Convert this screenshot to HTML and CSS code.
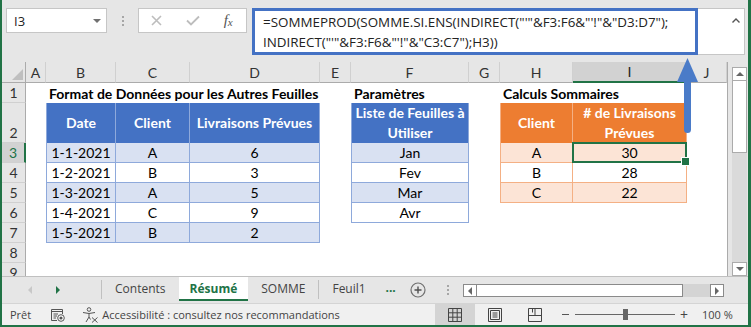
FILE: index.html
```html
<!DOCTYPE html>
<html lang="fr">
<head>
  <meta charset="UTF-8" />
  <meta name="viewport" content="width=device-width, initial-scale=1.0" />
  <title>Résumé - SOMMEPROD et INDIRECT</title>
  <link rel="stylesheet" href="styles.css">
</head>
<body>
  <div class="app">
    <!-- barre de formule -->
    <div class="fbar">
      <div class="namebox"><span>I3</span><i class="caret"></i></div>
      <div class="grip"><b></b><b></b><b></b></div>
      <div class="fbtns">
        <span><svg width="11" height="11" viewBox="0 0 11 11"><path d="M1 1L10 10M10 1L1 10" stroke="#bdbdbd" stroke-width="1.6" fill="none"/></svg></span>
        <span><svg width="14" height="11" viewBox="0 0 14 11"><path d="M1 5.5L5 9.5L13 1.5" stroke="#bdbdbd" stroke-width="1.8" fill="none"/></svg></span>
        <span class="fx">f<small>x</small></span>
      </div>
      <div class="formula">
        <p>=SOMMEPROD(SOMME.SI.ENS(INDIRECT("'"&amp;F3:F6&amp;"'!"&amp;"D3:D7");</p>
        <p>INDIRECT("'"&amp;F3:F6&amp;"'!"&amp;"C3:C7");H3))</p>
      </div>
      <div class="expand"><svg width="8" height="5" viewBox="0 0 8 5"><path d="M0.5 4.5L4 1L7.5 4.5" stroke="#555" stroke-width="1.4" fill="none"/></svg></div>
    </div>

    <div class="main">
      <div class="sheet">
        <div class="corner"><i></i></div>
        <div class="col">A</div>
        <div class="col">B</div>
        <div class="col">C</div>
        <div class="col">D</div>
        <div class="col">E</div>
        <div class="col">F</div>
        <div class="col">G</div>
        <div class="col">H</div>
        <div class="col on">I</div>
        <div class="col">J</div>

        <div class="row">1</div>
        <div></div>
        <div class="t">Format de Données pour les Autres Feuilles</div>
        <div></div><div></div><div></div>
        <div class="t">Paramètres</div>
        <div></div>
        <div class="t">Calculs Sommaires</div>

        <div class="row">2</div>
        <div></div>
        <div class="bh first">Date</div>
        <div class="bh">Client</div>
        <div class="bh">Livraisons Prévues</div>
        <div></div>
        <div class="bh first">Liste de Feuilles à<br>Utiliser</div>
        <div></div>
        <div class="oh first">Client</div>
        <div class="oh"># de Livraisons<br>Prévues</div>

        <div class="row on">3</div>
        <div></div>
        <div class="bd first alt">1-1-2021</div>
        <div class="bd alt">A</div>
        <div class="bd alt">6</div>
        <div></div>
        <div class="bd first alt">Jan</div>
        <div></div>
        <div class="od first oalt">A</div>
        <div class="od oalt sel">30</div>

        <div class="row">4</div>
        <div></div>
        <div class="bd first">1-2-2021</div>
        <div class="bd">B</div>
        <div class="bd">3</div>
        <div></div>
        <div class="bd first">Fev</div>
        <div></div>
        <div class="od first">B</div>
        <div class="od">28</div>

        <div class="row">5</div>
        <div></div>
        <div class="bd first alt">1-3-2021</div>
        <div class="bd alt">A</div>
        <div class="bd alt">5</div>
        <div></div>
        <div class="bd first alt">Mar</div>
        <div></div>
        <div class="od first oalt">C</div>
        <div class="od oalt">22</div>

        <div class="row">6</div>
        <div></div>
        <div class="bd first">1-4-2021</div>
        <div class="bd">C</div>
        <div class="bd">9</div>
        <div></div>
        <div class="bd first">Avr</div>

        <div class="row">7</div>
        <div></div>
        <div class="bd first alt">1-5-2021</div>
        <div class="bd alt">B</div>
        <div class="bd alt">2</div>

        <div class="row">8</div>
        <div class="row">9</div>
      </div>

      <div class="vscroll">
        <span class="sbtn up"></span>
        <span class="thumb"></span>
        <span class="track"></span>
        <span class="sbtn down"></span>
      </div>
    </div>

    <!-- onglets -->
    <div class="tabs">
      <div class="nav"><i class="prev"></i><i class="next"></i></div>
      <span class="bar"></span>
      <div class="tab">Contents</div>
      <div class="tab active">Résumé</div>
      <div class="tab">SOMME</div>
      <span class="bar"></span>
      <div class="tab">Feuil1</div>
      <div class="more">...</div>
      <div class="add"><svg width="16" height="16" viewBox="0 0 16 16"><circle cx="8" cy="8" r="7" stroke="#707070" stroke-width="1.2" fill="none"/><path d="M8 4.5V11.5M4.5 8H11.5" stroke="#505050" stroke-width="1.4"/></svg></div>
      <div class="grip dots"><b></b><b></b><b></b></div>
      <div class="hscroll">
        <span class="hbtn left"></span>
        <span class="hthumb"></span>
        <span class="htrack"></span>
        <span class="hbtn right"></span>
      </div>
    </div>

    <!-- barre d'état -->
    <div class="status">
      <span class="ready">Prêt</span>
      <svg class="macro" width="15" height="14" viewBox="0 0 15 14">
        <path d="M1.5 1.5H12.5V6M1.5 1.5V12.5H7" stroke="#555" fill="none"/>
        <path d="M1.5 3.5H12.5" stroke="#555"/>
        <path d="M3.5 6H8M3.5 8H7M3.5 10H6" stroke="#555"/>
        <circle cx="11" cy="10" r="3.3" stroke="#555" fill="#fff"/>
        <circle cx="11" cy="10" r="1.6" fill="#555"/>
      </svg>
      <svg class="access" width="17" height="16" viewBox="0 0 17 16">
        <circle cx="7" cy="2.5" r="1.8" stroke="#555" fill="none"/>
        <path d="M1 5.5L7 6.5L13 5.5M7 6.5V10M7 10L4 15M7 10L8.5 12.5" stroke="#555" fill="none"/>
        <path d="M10 10.5L15.5 15.5M15.5 10.5L10 15.5" stroke="#555"/>
      </svg>
      <span class="a11y">Accessibilité : consultez nos recommandations</span>
      <div class="views">
        <span class="view on"><svg width="14" height="14" viewBox="0 0 14 14"><path d="M0.5 0.5H13.5V13.5H0.5ZM0.5 4.8H13.5M0.5 9.2H13.5M4.8 0.5V13.5M9.2 0.5V13.5" stroke="#444" fill="none"/></svg></span>
        <span class="view"><svg width="14" height="14" viewBox="0 0 14 14"><path d="M0.5 0.5H13.5V13.5H0.5ZM2.5 2.5H11.5V11.5H2.5ZM4.5 5H9.5M4.5 7H9.5M4.5 9H9.5" stroke="#444" fill="none"/></svg></span>
        <span class="view"><svg width="14" height="14" viewBox="0 0 14 14"><path d="M0.5 0.5H13.5V13.5H0.5ZM0.5 7.5H13.5M7 0.5V7.5M4.5 0.5V4.5" stroke="#444" fill="none"/></svg></span>
      </div>
      <div class="zoom">
        <span class="minus"></span>
        <span class="slider"><i></i></span>
        <span class="plus">+</span>
        <span class="pct">100 %</span>
      </div>
    </div>

    <svg class="arrow" width="23" height="80" viewBox="0 0 23 80">
      <path d="M11.5 2L22 26H15V73.5A3.5 3.5 0 0 1 8 73.5V26H1Z" fill="#4a7bc8"/>
    </svg>
  </div>
</body>
</html>
```

FILE: styles.css
```css
* {
  box-sizing: border-box;
}
body {
  margin: 0;
  font-family: "Open Sans", sans-serif;
  color: #222;
}

.app {
  position: relative;
  width: 751px;
  height: 327px;
  overflow: hidden;
  background: #e6e6e6;
  border: 2px solid #217346;
  border-top: 0;
  border-right-width: 3px;
}

/* barre de formule */
.fbar {
  height: 62px;
  display: flex;
  align-items: flex-start;
  padding: 8px 0 0 4px;
}
.namebox {
  width: 101px;
  height: 25px;
  display: flex;
  align-items: center;
  justify-content: space-between;
  padding: 0 5px 0 7px;
  background: #fff;
  border: 1px solid #c6c6c6;
  font-size: 13px;
}
.caret {
  border-left: 4px solid transparent;
  border-right: 4px solid transparent;
  border-top: 4px solid #707070;
}
.grip {
  width: 2px;
  margin: 8px 14px 0 15px;
  display: flex;
  flex-direction: column;
  gap: 2px;
}
.grip b {
  width: 2px;
  height: 2px;
  background: #a6a6a6;
}
.fbtns {
  width: 109px;
  height: 25px;
  display: flex;
  background: #fff;
  border: 1px solid #c6c6c6;
}
.fbtns > span {
  flex: 1;
  display: flex;
  align-items: center;
  justify-content: center;
}
.fx {
  font-family: "Liberation Serif", serif;
  font-style: italic;
  font-size: 15px;
  color: #555;
}
.fx small {
  font-size: 11px;
  position: relative;
  top: 1px;
}
.formula {
  width: 446px;
  height: 47px;
  margin-left: 5px;
  padding: 1px 0 0 8px;
  background: #fff;
  border: 3px solid #4472c4;
  font-size: 13.4px;
  line-height: 20px;
}
.formula p {
  margin: 0;
  white-space: nowrap;
}
.expand {
  width: 47px;
  height: 47px;
  display: flex;
  justify-content: flex-end;
  align-items: flex-start;
  padding: 9px 4px 0 0;
  background: #fff;
  border: 1px solid #c6c6c6;
  border-left: 0;
}

/* feuille */
.main {
  display: flex;
  height: 214px;
}
.sheet {
  width: 726px;
  display: grid;
  grid-template-columns: 24px 20px 70px 74px 130px 31px 118px 31px 73px 114px 40px;
  grid-template-rows: 21px 20px 40px repeat(7, 20px);
  overflow: hidden;
  background: #fff;
  border-right: 1px solid #ababab;
  font-family: Lato, sans-serif;
  font-size: 14px;
  color: #000;
}
.sheet > div {
  display: flex;
  align-items: flex-end;
  justify-content: center;
  white-space: nowrap;
  line-height: 17px;
  padding-bottom: 1px;
}
.sheet .corner {
  justify-content: flex-end;
  padding: 0 2px 2px 0;
  background: #e6e6e6;
  border-right: 1px solid #ababab;
  border-bottom: 1px solid #ababab;
}
.corner i {
  border-left: 11px solid transparent;
  border-bottom: 11px solid #bfbfbf;
}
.sheet .col {
  align-items: center;
  padding: 0;
  background: #e6e6e6;
  border-right: 1px solid #d0d0d0;
  border-bottom: 1px solid #ababab;
  color: #333;
}
.sheet .col.on {
  background: #d2d2d2;
  border-bottom: 2px solid #217346;
  color: #222;
}
.sheet .row {
  grid-column: 1;
  background: #e6e6e6;
  border-right: 1px solid #ababab;
  border-bottom: 1px solid #d0d0d0;
  color: #333;
}
.sheet .row.on {
  background: #d2d2d2;
  border-right: 2px solid #217346;
  color: #217346;
}
.sheet .t {
  justify-content: flex-start;
  padding-left: 3px;
  font-weight: 700;
}
.sheet .bh,
.sheet .oh {
  align-items: center;
  padding: 0;
  text-align: center;
  line-height: 20px;
  font-weight: 700;
  color: #fff;
}
.bh {
  background: #4472c4;
  border-right: 1px solid #8ea9db;
}
.bh.first,
.bd.first {
  border-left: 1px solid #8ea9db;
}
.bd {
  border-right: 1px solid #8ea9db;
  border-bottom: 1px solid #8ea9db;
}
.alt {
  background: #d9e1f2;
}
.oh {
  background: #ed7d31;
  border-right: 1px solid #f4b084;
}
.oh.first,
.od.first {
  border-left: 1px solid #f4b084;
}
.od {
  border-right: 1px solid #f4b084;
  border-bottom: 1px solid #f4b084;
}
.oalt {
  background: #fce4d6;
}
.sel {
  position: relative;
}
.sel::after {
  content: "";
  position: absolute;
  top: -1px;
  left: -1px;
  right: -1px;
  bottom: -1px;
  border: 2px solid #217346;
}
.sel::before {
  content: "";
  position: absolute;
  right: -4px;
  bottom: -4px;
  width: 7px;
  height: 7px;
  background: #217346;
  border: 1px solid #fff;
  z-index: 1;
}

/* ascenseur vertical */
.vscroll {
  width: 20px;
  display: flex;
  flex-direction: column;
  padding: 5px 1px 0 4px;
}
.sbtn {
  height: 14px;
  display: flex;
  align-items: center;
  justify-content: center;
  background: #fff;
  border: 1px solid #ababab;
}
.sbtn::before {
  content: "";
  border-left: 4px solid transparent;
  border-right: 4px solid transparent;
}
.sbtn.up::before {
  border-bottom: 4px solid #666;
}
.sbtn.down::before {
  border-top: 4px solid #666;
}
.thumb {
  height: 72px;
  background: #fff;
  border: 1px solid #ababab;
  border-top: 0;
}
.track {
  flex: 1;
  background: #dadada;
}

/* onglets */
.tabs {
  height: 27px;
  display: flex;
  align-items: flex-start;
  border-top: 1px solid #c0c0c0;
  font-size: 12px;
  color: #444;
}
.nav {
  width: 99px;
  height: 26px;
  position: relative;
  display: flex;
  align-items: center;
  padding-left: 26px;
  gap: 24px;
}
.nav i {
  border-top: 4px solid transparent;
  border-bottom: 4px solid transparent;
}
.prev {
  border-right: 4px solid #c8c8c8;
}
.next {
  border-left: 4px solid #217346;
}
.bar {
  width: 1px;
  height: 19px;
  margin-top: 3px;
  background: #c0c0c0;
}
.tab {
  height: 24px;
  padding: 2px 13px 0;
  line-height: 20px;
  border-bottom: 2px solid transparent;
  white-space: nowrap;
}
.tab.active {
  padding: 2px 11px 0;
  background: #fff;
  border-bottom-color: #217346;
  font-weight: 700;
  color: #217346;
}
.more {
  width: 24px;
  height: 24px;
  line-height: 22px;
  text-align: center;
  font-weight: 700;
  color: #217346;
}
.add {
  width: 30px;
  height: 26px;
  display: flex;
  align-items: center;
  justify-content: center;
}
.grip.dots {
  width: 30px;
  margin: 8px 0 0;
  align-items: center;
}
.hscroll {
  width: 261px;
  height: 13px;
  margin-top: 7px;
  display: flex;
}
.hbtn {
  width: 14px;
  display: flex;
  align-items: center;
  justify-content: center;
  background: #fff;
  border: 1px solid #8a8a8a;
}
.hbtn::before {
  content: "";
  border-top: 4px solid transparent;
  border-bottom: 4px solid transparent;
}
.hbtn.left::before {
  border-right: 4px solid #666;
}
.hbtn.right::before {
  border-left: 4px solid #666;
}
.hthumb {
  width: 206px;
  background: #fff;
  border: 1px solid #8a8a8a;
  border-left: 0;
}
.htrack {
  flex: 1;
  background: #d4d4d4;
}

/* barre d'état */
.status {
  height: 22px;
  display: flex;
  align-items: center;
  padding-left: 8px;
  background: #f0f0f0;
  border-top: 1px solid #d4d4d4;
  font-size: 11px;
  color: #444;
}
.macro {
  margin-left: 19px;
}
.access {
  margin-left: 17px;
}
.a11y {
  margin-left: 3px;
}
.views {
  display: flex;
  margin-left: auto;
  align-self: stretch;
}
.view {
  width: 40px;
  display: flex;
  align-items: center;
  justify-content: center;
}
.view.on {
  background: #d4d4d4;
}
.zoom {
  display: flex;
  align-items: center;
}
.minus {
  width: 7px;
  height: 1px;
  margin-left: 7px;
  background: #555;
}
.slider {
  width: 100px;
  height: 1px;
  margin-left: 6px;
  display: flex;
  justify-content: center;
  align-items: center;
  background: #666;
}
.slider i {
  width: 5px;
  height: 11px;
  background: #666;
}
.plus {
  width: 8px;
  margin-left: 5px;
  font-size: 14px;
  line-height: 14px;
  text-align: center;
}
.pct {
  width: 46px;
  margin-left: 14px;
}

.arrow {
  position: absolute;
  left: 674px;
  top: 56px;
}
```
